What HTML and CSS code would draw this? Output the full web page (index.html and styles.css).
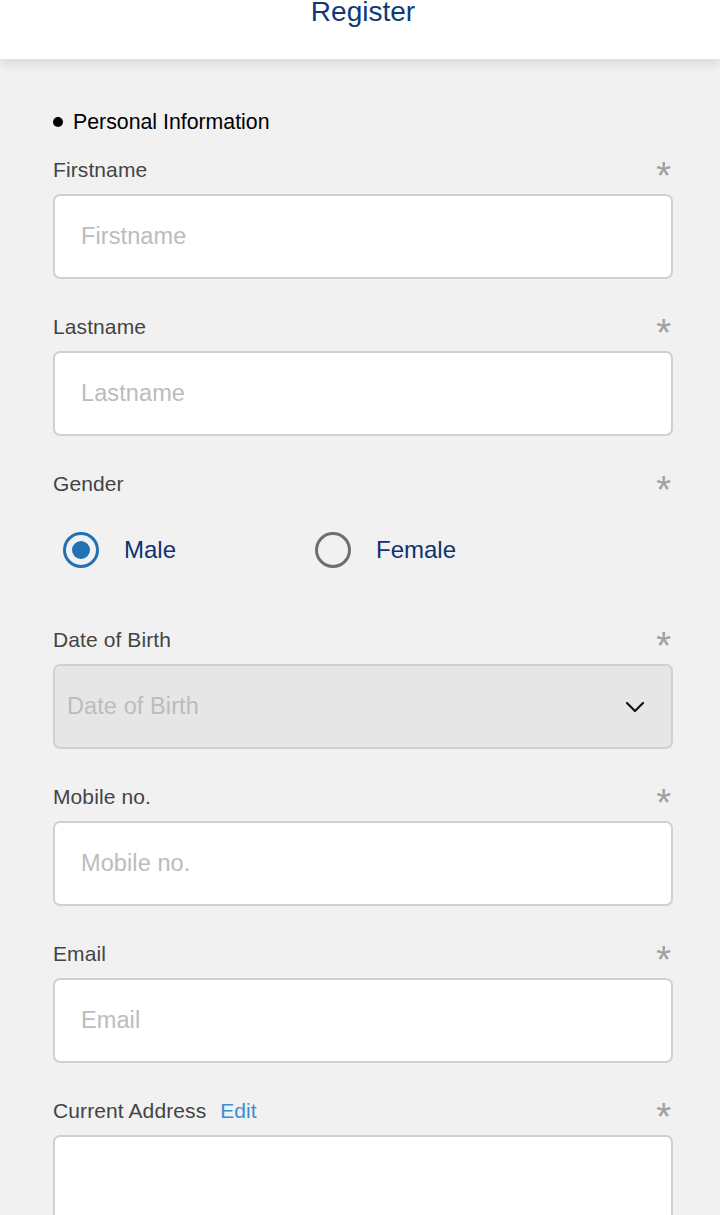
FILE: index.html
```html
<!DOCTYPE html>
<html>
<head>
<meta charset="utf-8">
<link rel="stylesheet" href="styles.css">
</head>
<body>
<header class="topbar">
  <h1 class="title">Register</h1>
</header>
<main class="form">
  <div class="section-title"><span class="dot"></span>Personal Information</div>

  <div class="field">
    <div class="label-row"><span class="label">Firstname</span><span class="req">*</span></div>
    <div class="box"><span class="ph">Firstname</span></div>
  </div>

  <div class="field">
    <div class="label-row"><span class="label">Lastname</span><span class="req">*</span></div>
    <div class="box"><span class="ph">Lastname</span></div>
  </div>

  <div class="field field-radio">
    <div class="label-row"><span class="label">Gender</span><span class="req">*</span></div>
    <div class="radios">
      <div class="radio-opt">
        <span class="radio checked"></span><span class="radio-text">Male</span>
      </div>
      <div class="radio-opt">
        <span class="radio"></span><span class="radio-text">Female</span>
      </div>
    </div>
  </div>

  <div class="field">
    <div class="label-row"><span class="label">Date of Birth</span><span class="req">*</span></div>
    <div class="box select"><span class="ph">Date of Birth</span>
      <svg class="chev" width="20" height="12" viewBox="0 0 20 12"><polyline points="2,2 10,10 18,2" fill="none" stroke="#111" stroke-width="2.2" stroke-linecap="round" stroke-linejoin="round"/></svg>
    </div>
  </div>

  <div class="field">
    <div class="label-row"><span class="label">Mobile no.</span><span class="req">*</span></div>
    <div class="box"><span class="ph">Mobile no.</span></div>
  </div>

  <div class="field">
    <div class="label-row"><span class="label">Email</span><span class="req">*</span></div>
    <div class="box"><span class="ph">Email</span></div>
  </div>

  <div class="field">
    <div class="label-row"><span class="label">Current Address <span class="edit">Edit</span></span><span class="req">*</span></div>
    <div class="box tall"></div>
  </div>
</main>
</body>
</html>
```
FILE: styles.css
```css
html, body {
  margin: 0;
  padding: 0;
  background: #f1f1f1;
  font-family: "Liberation Sans", Arial, sans-serif;
  overflow: hidden;
}
.topbar {
  height: 60px;
  background: #fff;
  box-shadow: 0 3px 10px rgba(0,0,0,0.12);
  border-bottom: 1px solid #e2e2e2;
  box-sizing: border-box;
  position: relative;
  z-index: 1;
}
.title {
  margin: 0;
  text-align: center;
  font-weight: normal;
  font-size: 28px;
  line-height: 24px;
  color: #0f3a78;
  padding-left: 6px;
}
.form {
  padding: 50px 47px 0 53px;
}
.section-title {
  display: flex;
  align-items: center;
  font-size: 21.3px;
  line-height: 24px;
  color: #000;
  margin-bottom: 24px;
}
.dot {
  width: 10px;
  height: 10px;
  border-radius: 50%;
  background: #000;
  margin-right: 10px;
}
.field {
  margin-bottom: 36px;
}
.label-row {
  display: flex;
  justify-content: space-between;
  align-items: flex-start;
  height: 24px;
  margin-bottom: 12px;
}
.label {
  font-size: 21px;
  letter-spacing: 0.1px;
  line-height: 24px;
  color: #444;
}
.edit {
  color: #3a8fd6;
  margin-left: 8px;
}
.req {
  font-size: 38px;
  line-height: 24px;
  height: 24px;
  padding-top: 6px;
  color: #a0a0a0;
  margin-right: 2px;
}
.box {
  height: 85px;
  box-sizing: border-box;
  background: #fff;
  border: 2px solid #d0d0d0;
  border-radius: 7px;
  display: flex;
  align-items: center;
  padding-left: 26px;
}
.ph {
  font-size: 23.5px;
  color: #bcbcbc;
  letter-spacing: 0.1px;
}
.select {
  background: #e6e6e6;
  padding-left: 12px;
  justify-content: space-between;
  padding-right: 26px;
}
.chev {
  display: block;
}
.tall {
  height: 140px;
}
.field-radio {
  margin-bottom: 60px;
}
.field-radio .label-row {
  margin-bottom: 36px;
}
.radios {
  display: flex;
  height: 36px;
  padding-left: 10px;
}
.radio-opt {
  display: flex;
  align-items: center;
  width: 252px;
}
.radio {
  width: 36px;
  height: 36px;
  box-sizing: border-box;
  border-radius: 50%;
  border: 3px solid #6e6e6e;
  position: relative;
  margin-right: 25px;
}
.radio.checked {
  border-color: #2271b3;
}
.radio.checked::after {
  content: "";
  position: absolute;
  left: 6px;
  top: 6px;
  width: 18px;
  height: 18px;
  border-radius: 50%;
  background: #2271b3;
}
.radio-text {
  font-size: 24px;
  color: #0e3370;
}
```
